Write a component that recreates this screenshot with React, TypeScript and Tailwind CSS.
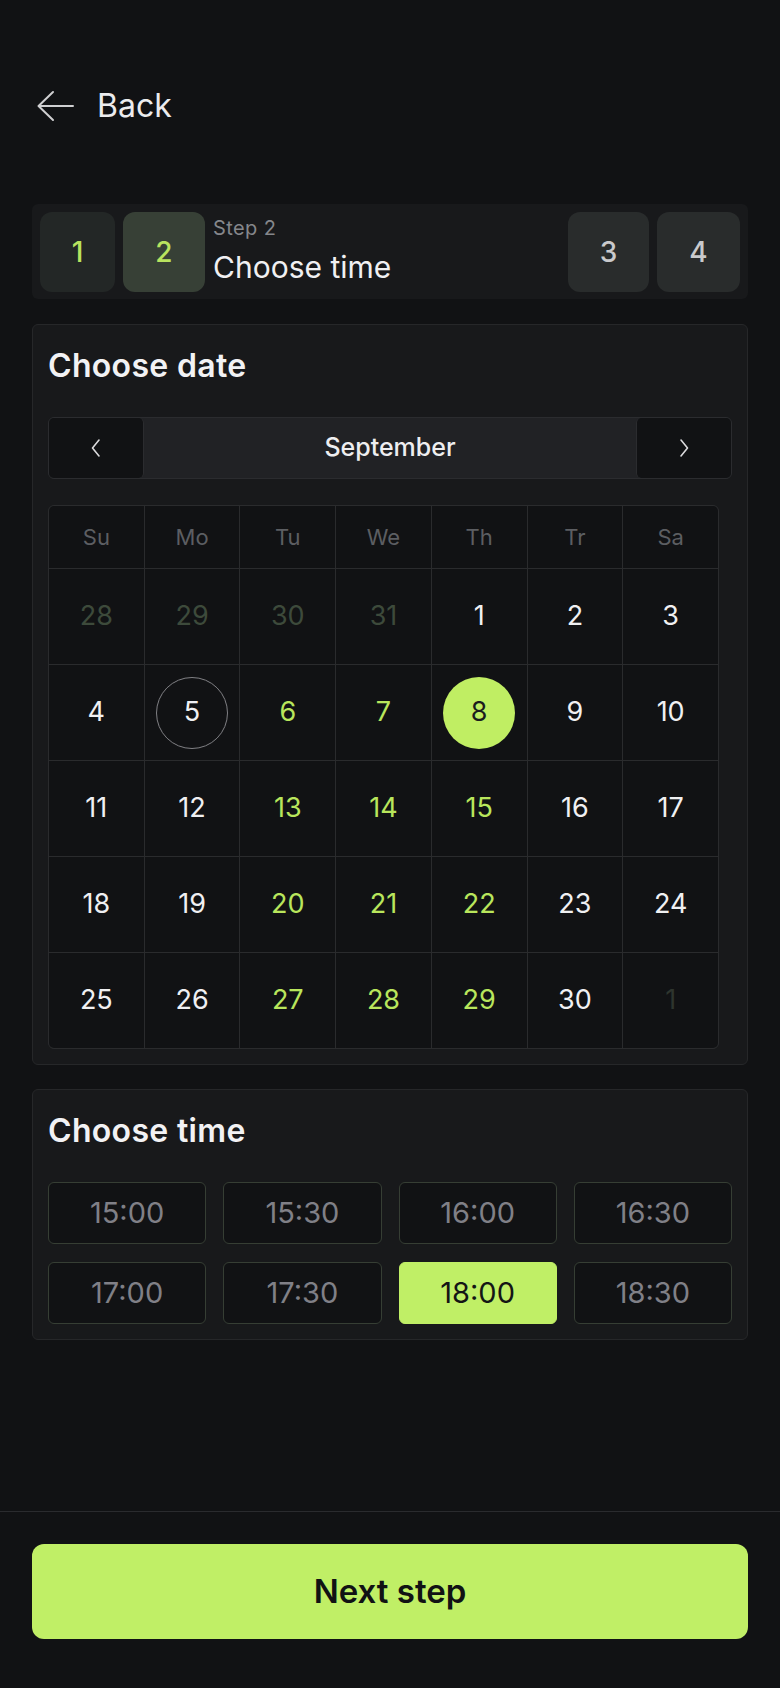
import { useState } from "react"

const weekDays = ["Su", "Mo", "Tu", "We", "Th", "Tr", "Sa"]

type Day = { n: number; kind: "prev" | "next" | "day" | "free" }

const days: Day[] = [
  { n: 28, kind: "prev" },
  { n: 29, kind: "prev" },
  { n: 30, kind: "prev" },
  { n: 31, kind: "prev" },
  ...Array.from({ length: 30 }, (_, i) => {
    const n = i + 1
    const col = (n + 3) % 7
    const free = n >= 6 && col >= 2 && col <= 4
    return { n, kind: free ? "free" : "day" } as Day
  }),
  { n: 1, kind: "next" },
]

const times = ["15:00", "15:30", "16:00", "16:30", "17:00", "17:30", "18:00", "18:30"]

function BackArrow() {
  return (
    <svg width="40" height="32" viewBox="0 0 40 32" fill="none">
      <path
        d="M4.5 16H39M19 2L4.5 16L19 30"
        stroke="#cfcfd1"
        strokeWidth="2"
        strokeLinecap="round"
        strokeLinejoin="round"
      />
    </svg>
  )
}

function Chevron({ dir }: { dir: "left" | "right" }) {
  return (
    <svg width="12" height="20" viewBox="0 0 12 20" fill="none">
      <path
        d={dir === "left" ? "M9 2L2.5 10L9 18" : "M3 2L9.5 10L3 18"}
        stroke="#dcdcde"
        strokeWidth="1.6"
        strokeLinecap="round"
        strokeLinejoin="round"
      />
    </svg>
  )
}

export default function App() {
  const [selectedDay, setSelectedDay] = useState(8)
  const [selectedTime, setSelectedTime] = useState("18:00")

  return (
    <div className="h-screen bg-[#111214] flex flex-col font-['Inter',sans-serif] text-[#ececee]">
      <div className="flex-1 px-8">
        {/* Back */}
        <button className="mt-[84px] h-11 flex items-center">
          <span className="ml-[2px]">
            <BackArrow />
          </span>
          <span className="ml-[23px] text-[32px] leading-[44px] text-[#ececee]">Back</span>
        </button>

        {/* Stepper */}
        <div className="mt-[76px] h-[95px] rounded-md bg-[#18191b] pt-2 pb-[7px] px-2 flex gap-2">
          <div className="w-[75px] rounded-xl bg-[#232726] flex items-center justify-center text-[28px] font-medium text-[#b8e35f]">
            1
          </div>
          <div className="w-[82px] rounded-xl bg-[#374036] flex items-center justify-center text-[28px] font-medium text-[#b8e35f]">
            2
          </div>
          <div className="flex-1 flex flex-col pt-1">
            <span className="text-[20px] leading-6 tracking-[0.02em] text-[#85878b]">Step 2</span>
            <span className="mt-[9px] text-[30px] leading-9 text-[#f0f0f2]">Choose time</span>
          </div>
          <div className="w-[81px] rounded-xl bg-[#292c2c] flex items-center justify-center text-[28px] font-medium text-[#c9cacc]">
            3
          </div>
          <div className="w-[83px] rounded-xl bg-[#292c2c] flex items-center justify-center text-[28px] font-medium text-[#c9cacc]">
            4
          </div>
        </div>

        {/* Date card */}
        <div className="mt-[25px] rounded-md border border-[#262729] bg-[#18191b] p-[15px]">
          <h2 className="mt-[6px] mb-[31px] text-[32px] leading-[40px] font-semibold tracking-[0.01em] text-[#f2f2f4]">
            Choose date
          </h2>

          <div className="h-[62px] rounded-md border border-[#2b2c2f] bg-[#212225] flex items-stretch">
            <button className="w-[95px] rounded-[5px] bg-[#111214] border-r border-[#2b2c2f] flex items-center justify-center">
              <Chevron dir="left" />
            </button>
            <div className="flex-1 flex items-center justify-center text-[25px] font-medium text-[#eeeef0]">
              September
            </div>
            <button className="w-[95px] rounded-[5px] bg-[#111214] border-l border-[#2b2c2f] flex items-center justify-center">
              <Chevron dir="right" />
            </button>
          </div>

          <div className="mt-[26px] w-[671px] rounded-md border border-[#2a2b2d] bg-[#2a2b2d] overflow-hidden grid grid-cols-7 gap-px">
            {weekDays.map((d) => (
              <div
                key={d}
                className="h-[62px] bg-[#111214] flex items-center justify-center text-[22px] text-[#5c5e62]"
              >
                {d}
              </div>
            ))}
            {days.map((d, i) => {
              const isToday = d.kind !== "prev" && d.kind !== "next" && d.n === 5
              const isSelected = (d.kind === "free" || d.kind === "day") && d.n === selectedDay
              let color = "text-[#f0f0f2]"
              if (d.kind === "prev") color = "text-[#3d4a3b]"
              if (d.kind === "next") color = "text-[#2e352e]"
              if (d.kind === "free") color = "text-[#b9e65c]"
              return (
                <div
                  key={i}
                  onClick={() => d.kind === "free" && setSelectedDay(d.n)}
                  className="h-[95px] bg-[#111214] flex items-center justify-center"
                >
                  <span
                    className={
                      "w-[72px] h-[72px] rounded-full flex items-center justify-center text-[27px] " +
                      (isSelected
                        ? "bg-[#c0ee63] text-[#1b1c1d]"
                        : isToday
                        ? "border-[1.5px] border-[#808084] " + color
                        : color)
                    }
                  >
                    {d.n}
                  </span>
                </div>
              )
            })}
          </div>
        </div>

        {/* Time card */}
        <div className="mt-6 rounded-md border border-[#262729] bg-[#18191b] p-[15px]">
          <h2 className="mt-[6px] mb-[31px] text-[32px] leading-[40px] font-semibold tracking-[0.01em] text-[#f2f2f4]">
            Choose time
          </h2>
          <div className="grid grid-cols-4 gap-x-[17px] gap-y-[18px]">
            {times.map((t) => (
              <button
                key={t}
                onClick={() => setSelectedTime(t)}
                className={
                  "h-[62px] rounded-md flex items-center justify-center text-[29px] " +
                  (t === selectedTime
                    ? "bg-[#c0ef66] text-[#141515] border border-[#c0ef66]"
                    : "bg-[#111214] text-[#808087] border border-[#363e34]")
                }
              >
                {t}
              </button>
            ))}
          </div>
        </div>
      </div>

      {/* Footer */}
      <div className="border-t border-[#2a2b2e] px-8 pt-8 pb-[49px]">
        <button className="w-full h-[95px] rounded-xl bg-[#c0ef66] text-[33px] font-semibold text-[#111214]">
          Next step
        </button>
      </div>
    </div>
  )
}
